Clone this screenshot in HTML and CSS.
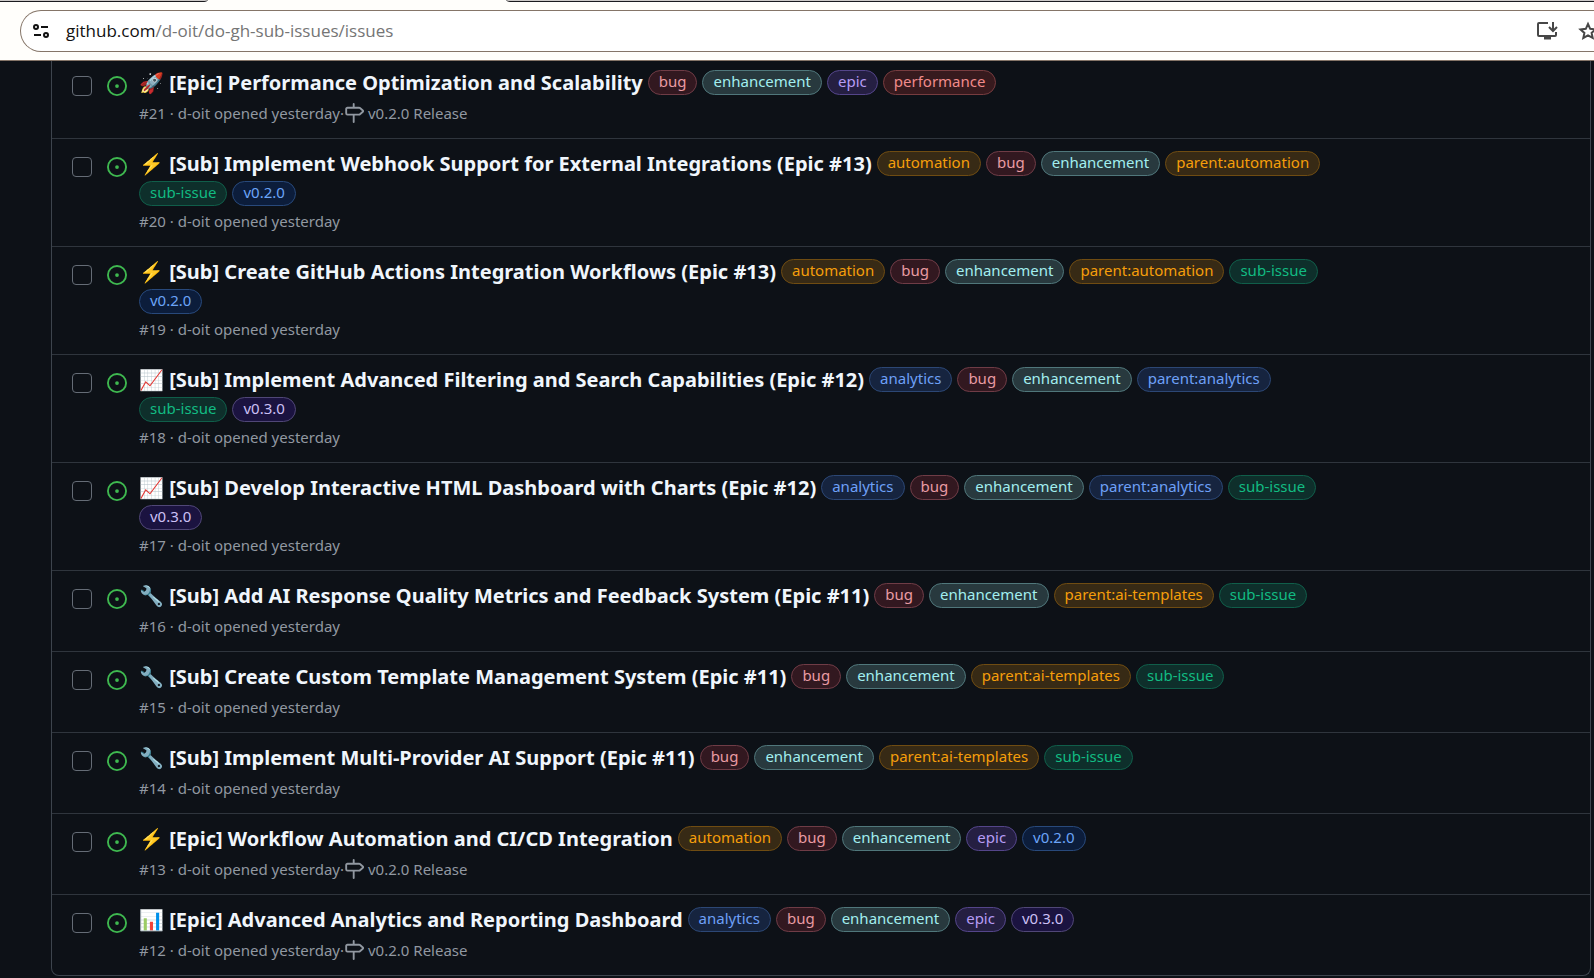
FILE: index.html
```
<!DOCTYPE html>
<html lang="en">
<head>
<meta charset="utf-8">
<title>Issues · d-oit/do-gh-sub-issues</title>
<link rel="stylesheet" href="styles.css">
</head>
<body>
<svg class="sprite" aria-hidden="true">
  <symbol id="open" viewBox="0 0 16 16"><path d="M8 9.5a1.5 1.5 0 1 0 0-3 1.5 1.5 0 0 0 0 3Z"/><path d="M8 0a8 8 0 1 1 0 16A8 8 0 0 1 8 0ZM1.5 8a6.5 6.5 0 1 0 13 0 6.5 6.5 0 0 0-13 0Z"/></symbol>
  <symbol id="milestone" viewBox="0 0 16 16"><path d="M7.75 0a.75.75 0 0 1 .75.75V3h3.634c.414 0 .814.147 1.13.414l2.07 1.75a1.75 1.75 0 0 1 0 2.672l-2.07 1.75a1.75 1.75 0 0 1-1.13.414H8.5v5.25a.75.75 0 0 1-1.5 0V10H2.75A1.75 1.75 0 0 1 1 8.25v-3.5C1 3.784 1.784 3 2.75 3H7V.75A.75.75 0 0 1 7.75 0Zm4.384 8.5a.25.25 0 0 0 .161-.06l2.07-1.75a.248.248 0 0 0 0-.38l-2.07-1.75a.25.25 0 0 0-.161-.06H2.75a.25.25 0 0 0-.25.25v3.5c0 .138.112.25.25.25h9.384Z"/></symbol>
</svg>
<header class="browser">
  <div class="tabs"><span class="tab-left"></span><span class="tab-active"></span><span class="tab-right"></span></div>
  <div class="toolbar">
    <div class="address">
      <button class="tool" aria-label="View site information">
        <svg width="16" height="16" viewBox="0 0 16 16" fill="none" stroke="#111" stroke-width="2"><circle cx="3" cy="4" r="2"/><path d="M8 4h7M1 12h7"/><circle cx="13" cy="12" r="2"/></svg>
      </button>
      <a class="url" href="#"><span class="host">github.com</span>/d-oit/do-gh-sub-issues/issues</a>
      <button class="tool install" aria-label="Install app">
        <svg width="22" height="20" viewBox="0 0 22 20" fill="none" stroke="#474747" stroke-width="2"><path d="M12 2H3q-1 0-1 1v11q0 1 1 1h16q1 0 1-1v-3M17 1v8M13 6l4 4 4-4"/><path d="M8 17h7" stroke-width="3"/></svg>
      </button>
      <button class="tool star" aria-label="Bookmark this tab">
        <svg width="20" height="20" viewBox="0 0 20 20" fill="none" stroke="#474747" stroke-width="2"><path d="M10 3l2.200 4.800 5.300.6-3.900 3.500 1.100 5.100L10 14.400 5.300 17l1.100-5.100L2.500 8.400l5.300-.6Z"/></svg>
      </button>
    </div>
  </div>
</header>
<main class="page">
  <ul class="issues" id="issues"></ul>
</main>
<script src="issues.js"></script>
</body>
</html>
```
FILE: styles.css
```
* { box-sizing: border-box; }
body {
  margin: 0;
  background: #0d1117;
  color: #f0f6fc;
  font-family: "Noto Sans", sans-serif;
  overflow: hidden;
}
.sprite { position: absolute; width: 0; height: 0; }
button { border: 0; padding: 0; background: none; }

.browser { background: #fffefb; border-bottom: 1px solid #857568; }
.tabs { display: flex; height: 2px; }
.tab-left, .tab-right { background: #ccc9c8; border-bottom: 1px solid #1b1b1f; }
.tab-left { width: 208px; border-bottom-right-radius: 6px 2px; }
.tab-active { width: 298px; }
.tab-right { flex: 1; border-bottom-left-radius: 6px 2px; }
.toolbar { padding: 8px 0 8px 20px; }
.address {
  display: flex;
  align-items: center;
  height: 42px;
  padding-left: 12px;
  border: 1px solid #857568;
  border-right: 0;
  border-radius: 21px 0 0 21px;
  background: #fff;
}
.tool { display: flex; flex: none; }
.url {
  flex: 1;
  margin-left: 17px;
  font-family: "Open Sans", sans-serif;
  font-size: 17px;
  line-height: 24px;
  color: #757575;
  text-decoration: none;
}
.host { color: #111; }
.install { margin-right: 20px; }
.star { margin-right: -4px; }

.page { padding: 0 3px 0 51px; }
.issues {
  margin: 0;
  padding: 0;
  list-style: none;
  border: 1px solid #3d444d;
  border-top: 0;
  border-radius: 0 0 8px 8px;
}
.issue {
  display: grid;
  grid-template-columns: 20px 20px minmax(0, 1fr);
  padding: 9px 240px 14px 20px;
  border-top: 1px solid #2f353d;
}
.issue:first-child { padding-top: 6px; border-top: 0; }
.pick {
  appearance: none;
  width: 20px;
  height: 20px;
  margin: 9px 0 0;
  border: 1px solid #656c76;
  border-radius: 4px;
}
.state {
  width: 20px;
  height: 20px;
  margin: 9px 0 0 15px;
  fill: #3fb950;
}
.body { margin-left: 27px; }
.heading {
  display: flex;
  flex-wrap: wrap;
  align-items: center;
  gap: 2px 5px;
  margin: 0;
  font-weight: 400;
}
.title {
  font-size: 20px;
  font-weight: 700;
  line-height: 31px;
  color: #f0f6fc;
  text-decoration: none;
}
.label {
  height: 25px;
  padding: 0 10px;
  border: 1px solid;
  border-radius: 13px;
  font-size: 15px;
  line-height: 20px;
  text-decoration: none;
  white-space: nowrap;
}
.meta {
  display: flex;
  align-items: center;
  margin: 4px 0 0;
  font-size: 15px;
  line-height: 22px;
  color: #9198a1;
}
.milestone {
  display: flex;
  align-items: center;
  gap: 4px;
  color: inherit;
  text-decoration: none;
}
.milestone svg { width: 20px; height: 20px; fill: currentColor; }

.bug { color: #e99ba3; background: #321820; border-color: #6f3c46; }
.enhancement { color: #a2eeef; background: #28393e; border-color: #50777b; }
.epic { color: #b69cf5; background: #251f42; border-color: #54458a; }
.performance { color: #f08b8b; background: #371a1e; border-color: #773c3f; }
.amber { color: #f59e0b; background: #372a15; border-color: #6f4c12; }
.green { color: #12bb82; background: #0e2f2b; border-color: #105e4a; }
.blue { color: #6ea0f7; background: #16243f; border-color: #2c4775; }
.v2 { color: #6ba4f8; background: #0c1d3b; border-color: #28497b; }
.v3 { color: #cbc0f5; background: #1b1340; border-color: #504777; }
```
FILE: issues.js
```
const issues = [
  [21, '🚀 [Epic] Performance Optimization and Scalability', 'bug enhancement epic performance', 'v0.2.0 Release'],
  [20, '⚡ [Sub] Implement Webhook Support for External Integrations (Epic #13)', 'automation bug enhancement parent:automation sub-issue v0.2.0'],
  [19, '⚡ [Sub] Create GitHub Actions Integration Workflows (Epic #13)', 'automation bug enhancement parent:automation sub-issue v0.2.0'],
  [18, '📈 [Sub] Implement Advanced Filtering and Search Capabilities (Epic #12)', 'analytics bug enhancement parent:analytics sub-issue v0.3.0'],
  [17, '📈 [Sub] Develop Interactive HTML Dashboard with Charts (Epic #12)', 'analytics bug enhancement parent:analytics sub-issue v0.3.0'],
  [16, '🔧 [Sub] Add AI Response Quality Metrics and Feedback System (Epic #11)', 'bug enhancement parent:ai-templates sub-issue'],
  [15, '🔧 [Sub] Create Custom Template Management System (Epic #11)', 'bug enhancement parent:ai-templates sub-issue'],
  [14, '🔧 [Sub] Implement Multi-Provider AI Support (Epic #11)', 'bug enhancement parent:ai-templates sub-issue'],
  [13, '⚡ [Epic] Workflow Automation and CI/CD Integration', 'automation bug enhancement epic v0.2.0', 'v0.2.0 Release'],
  [12, '📊 [Epic] Advanced Analytics and Reporting Dashboard', 'analytics bug enhancement epic v0.3.0', 'v0.2.0 Release'],
];

const tones = {
  'automation': 'amber', 'parent:automation': 'amber', 'parent:ai-templates': 'amber',
  'analytics': 'blue', 'parent:analytics': 'blue', 'sub-issue': 'green',
  'v0.2.0': 'v2', 'v0.3.0': 'v3',
};

document.getElementById('issues').innerHTML = issues.map(([number, title, labels, milestone]) => `
  <li class="issue">
    <input class="pick" type="checkbox" aria-labelledby="issue-${number}">
    <svg class="state" role="img" aria-label="Open"><use href="#open"/></svg>
    <div class="body">
      <h3 class="heading">
        <a class="title" id="issue-${number}" href="#">${title}</a>
        ${labels.split(' ').map(name => `<a class="label ${tones[name] || name}" href="#">${name}</a>`).join('')}
      </h3>
      <p class="meta"><span>#${number} · d-oit opened yesterday</span>${milestone ? `<span>·</span><a class="milestone" href="#"><svg aria-hidden="true"><use href="#milestone"/></svg>${milestone}</a>` : ''}</p>
    </div>
  </li>`).join('');
```
